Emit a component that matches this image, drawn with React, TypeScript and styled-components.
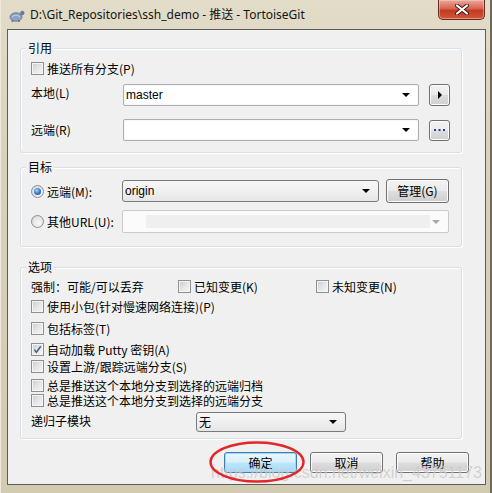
import React from 'react';
import styled, { createGlobalStyle, css } from 'styled-components';

const Global = createGlobalStyle`
  html, body { margin: 0; padding: 0; background: #ffffff; }
  body {
    width: 492px; height: 493px; overflow: hidden;
    font-family: "Noto Sans CJK SC", "Noto Sans", sans-serif;
    font-size: 12px; color: #000;
  }
  * { box-sizing: border-box; }
`;

const Window = styled.div`
  position: relative;
  width: 492px;
  height: 493px;
  display: flex;
  flex-direction: column;
  padding: 0 6px 8px 7px;
  background: linear-gradient(to bottom, #e2dcc8 0%, #d9d2bb 30%, #d2cab1 100%);
  box-shadow: inset -2px 0 0 #6f6a5c, inset 1px 0 0 #efeadb;
`;

const TitleBar = styled.div`
  height: 29px;
  display: flex;
  align-items: flex-start;
  padding-left: 2px;
`;

const TitleIcon = styled.div`
  width: 16px;
  height: 14px;
  margin-top: 9px;
  display: flex;
`;

const TitleText = styled.div`
  margin-left: 5px;
  margin-top: 7px;
  font-family: "Noto Sans", "Noto Sans CJK SC", sans-serif;
  font-size: 12px;
  line-height: 16px;
  color: #141414;
  flex: 1;
  white-space: nowrap;
`;

const CloseButton = styled.div`
  width: 47px;
  height: 20px;
  margin-right: 1px;
  border: 1px solid #5e2a22;
  border-top: none;
  border-radius: 0 0 5px 5px;
  background: linear-gradient(to bottom, #e9a99a 0%, #d8644f 45%, #c23a22 55%, #d4553a 100%);
  box-shadow: inset 0 0 0 1px rgba(255, 220, 210, 0.45);
  display: flex;
  align-items: center;
  justify-content: center;
`;

const Client = styled.div`
  flex: 1;
  border: 1px solid #5c5c5c;
  background: #f0f0f0;
  padding: 18px 16px 11px 12px;
  display: flex;
  flex-direction: column;
`;

const Group = styled.div<{ $height: number; $gapAfter: number; $padTop: number }>`
  position: relative;
  height: ${(p) => p.$height}px;
  margin-right: 7px;
  margin-bottom: ${(p) => p.$gapAfter}px;
  border: 1px solid #d5dfe5;
  border-radius: 3px;
  box-shadow: inset 1px 1px 0 #ffffff, 1px 1px 0 #ffffff;
  padding: ${(p) => p.$padTop}px 10px 0 10px;
  display: flex;
  flex-direction: column;
`;

const GroupTitle = styled.span`
  position: absolute;
  top: -8px;
  left: 5px;
  padding: 0 2px;
  background: #f0f0f0;
  line-height: 14px;
  font-size: 12px;
`;

const Row = styled.div<{ $top?: number; $h?: number }>`
  display: flex;
  align-items: center;
  height: ${(p) => p.$h ?? 13}px;
  margin-top: ${(p) => p.$top ?? 0}px;
  line-height: 13px;
  white-space: nowrap;
`;

const FieldGrid = styled.div<{ $top: number; $h: number; $cols: string }>`
  display: grid;
  grid-template-columns: ${(p) => p.$cols};
  align-items: center;
  height: ${(p) => p.$h}px;
  margin-top: ${(p) => p.$top}px;
  white-space: nowrap;
`;

const OptionsGrid = styled.div`
  display: grid;
  grid-template-columns: 147px 138px auto;
  align-items: center;
  height: 13px;
  margin-top: 0;
  white-space: nowrap;
  line-height: 13px;
`;

const Label = styled.span<{ $dy?: number }>`
  line-height: 13px;
  position: relative;
  top: ${(p) => p.$dy ?? 0}px;
`;

const Box = styled.span`
  width: 13px;
  height: 13px;
  flex: none;
  border: 1px solid #8e8f8f;
  background: linear-gradient(135deg, #c8cbcf 0%, #e4e5e7 50%, #f7f7f7 100%);
  box-shadow: inset 0 0 0 1px #f5f5f5;
  margin-right: 3px;
  display: flex;
  align-items: center;
  justify-content: center;
`;

const Check = styled.label`
  display: flex;
  align-items: center;
  height: 13px;
`;

const RadioDot = styled.span<{ $on?: boolean }>`
  width: 13px;
  height: 13px;
  flex: none;
  border-radius: 50%;
  border: 1px solid #8e8f8f;
  background: radial-gradient(circle at 60% 65%, #f8f8f8 0%, #e6e6e6 55%, #c9cbce 100%);
  margin-right: 3px;
  display: flex;
  align-items: center;
  justify-content: center;
  &::after {
    content: '';
    display: ${(p) => (p.$on ? 'block' : 'none')};
    width: 7px;
    height: 7px;
    border-radius: 50%;
    background: radial-gradient(circle at 40% 35%, #a9d5ff 0%, #3d86d6 45%, #0d3f86 100%);
  }
`;

const comboBase = css`
  position: relative;
  display: flex;
  align-items: center;
  padding-left: 2px;
  font-family: "Liberation Sans", "Noto Sans CJK SC", sans-serif;
  font-size: 12px;
`;

const Combo = styled.div<{ $w: number; $h: number; $kind?: 'edit' | 'list' | 'disabled' }>`
  ${comboBase};
  width: ${(p) => p.$w}px;
  height: ${(p) => p.$h}px;
  ${(p) =>
    p.$kind === 'list'
      ? css`
          border: 1px solid #7a7a7a;
          border-radius: 3px;
          background: linear-gradient(to bottom, #f7f7f7 0%, #f0f0f0 50%, #e6e6e6 100%);
        `
      : p.$kind === 'disabled'
      ? css`
          border: 1px solid #c9cacb;
          border-radius: 2px;
          background: #fbfbfb;
        `
      : css`
          border: 1px solid #abadb3;
          border-top-color: #abadb3;
          border-radius: 2px;
          background: #ffffff;
          box-shadow: inset 0 0 0 1px #f6f9fb;
        `}
`;

const ComboText = styled.span`
  flex: 1;
  line-height: 14px;
`;

const DisabledField = styled.span`
  position: absolute;
  left: 23px;
  right: 18px;
  top: 4px;
  bottom: 4px;
  background: #efefef;
`;

const Arrow = styled.span<{ $color?: string }>`
  position: absolute;
  right: 8px;
  top: 50%;
  margin-top: -2px;
  width: 0;
  height: 0;
  border-left: 4px solid transparent;
  border-right: 4px solid transparent;
  border-top: 4px solid ${(p) => p.$color ?? '#000'};
`;

const PushButton = styled.button<{ $w: number; $h: number; $default?: boolean }>`
  width: ${(p) => p.$w}px;
  height: ${(p) => p.$h}px;
  padding: 0;
  margin: 0;
  border: 1px solid ${(p) => (p.$default ? '#3c7fb1' : '#707070')};
  border-radius: 3px;
  background: ${(p) =>
    p.$default
      ? 'linear-gradient(to bottom, #eaf6fd 0%, #d9f0fc 48%, #bee6fd 52%, #a7d9f5 100%)'
      : 'linear-gradient(to bottom, #f2f2f2 0%, #ebebeb 48%, #dddddd 52%, #cfcfcf 100%)'};
  box-shadow: inset 0 0 0 1px ${(p) => (p.$default ? '#9fd7f4' : '#fcfcfc')};
  font-family: "Noto Sans CJK SC", "Noto Sans", sans-serif;
  font-size: 12px;
  line-height: 14px;
  color: #000;
  display: flex;
  align-items: center;
  justify-content: center;
`;

const ButtonRow = styled.div`
  display: flex;
  justify-content: flex-end;
  gap: 13px;
  margin-top: 0;
`;

const Watermark = styled.div`
  position: absolute;
  left: 211px;
  top: 464px;
  font-family: "Liberation Sans", Arial, sans-serif;
  font-size: 16px;
  line-height: 18px;
  color: rgba(175, 175, 175, 0.55);
  text-shadow: 0 0 1px rgba(255, 255, 255, 0.6);
  white-space: nowrap;
  pointer-events: none;
`;

const Ellipse = styled.svg`
  position: absolute;
  left: 207px;
  top: 440px;
  pointer-events: none;
`;

const TortoiseIcon = () => (
  <svg width="16" height="14" viewBox="0 0 16 14">
    <ellipse cx="7" cy="8" rx="6" ry="4.2" fill="#8ea3c4" stroke="#5b6b86" strokeWidth="0.8" />
    <path d="M3 8 Q7 4.5 11 8" fill="none" stroke="#c8d4e6" strokeWidth="0.9" />
    <circle cx="13.3" cy="4" r="1.8" fill="#6d7f9e" stroke="#4d5a73" strokeWidth="0.6" />
    <rect x="2.5" y="11" width="2" height="2" fill="#6d7f9e" />
    <rect x="9" y="11" width="2" height="2" fill="#6d7f9e" />
  </svg>
);

const CloseX = () => (
  <svg width="14" height="11" viewBox="0 0 14 11">
    <path d="M2 1.5 L12 9.5 M12 1.5 L2 9.5" stroke="#3b1b16" strokeWidth="4" strokeLinecap="round" />
    <path d="M2 1.5 L12 9.5 M12 1.5 L2 9.5" stroke="#ffffff" strokeWidth="2.2" strokeLinecap="round" />
  </svg>
);

const CheckBox = ({ checked, children }: { checked?: boolean; children: React.ReactNode }) => (
  <Check>
    <Box>
      {checked && (
        <svg width="9" height="9" viewBox="0 0 9 9">
          <path d="M1.3 4.6 L3.4 7.2 L7.8 1.3" fill="none" stroke="#4a5d80" strokeWidth="1.5" />
        </svg>
      )}
    </Box>
    <Label>{children}</Label>
  </Check>
);

const Radio = ({ on, children }: { on?: boolean; children: React.ReactNode }) => (
  <Check>
    <RadioDot $on={on} />
    <Label>{children}</Label>
  </Check>
);

export default function App() {
  return (
    <>
      <Global />
      <Window>
        <TitleBar>
          <TitleIcon>
            <TortoiseIcon />
          </TitleIcon>
          <TitleText>D:\Git_Repositories\ssh_demo - 推送 - TortoiseGit</TitleText>
          <CloseButton>
            <CloseX />
          </CloseButton>
        </TitleBar>
        <Client>
          <Group $height={105} $gapAfter={14} $padTop={12}>
            <GroupTitle>引用</GroupTitle>
            <Row $h={14}>
              <CheckBox>推送所有分支(P)</CheckBox>
            </Row>
            <FieldGrid $top={8} $h={23} $cols="92px 296px 10px 21px">
              <Label $dy={-2}>本地(L)</Label>
              <Combo $w={296} $h={22} $kind="edit">
                <ComboText>master</ComboText>
                <Arrow />
              </Combo>
              <span />
              <PushButton $w={21} $h={22}>
                <svg width="6" height="8" viewBox="0 0 6 8">
                  <path d="M1 0 L5 4 L1 8 Z" fill="#000" />
                </svg>
              </PushButton>
            </FieldGrid>
            <FieldGrid $top={13} $h={22} $cols="92px 296px 10px 21px">
              <Label $dy={-1}>远端(R)</Label>
              <Combo $w={296} $h={22} $kind="edit">
                <ComboText />
                <Arrow />
              </Combo>
              <span />
              <PushButton $w={21} $h={21}>
                <svg width="11" height="4" viewBox="0 0 11 4">
                  <rect x="0" y="1" width="2" height="2" fill="#2a3a9a" />
                  <rect x="4.5" y="1" width="2" height="2" fill="#2a3a9a" />
                  <rect x="9" y="1" width="2" height="2" fill="#2a3a9a" />
                </svg>
              </PushButton>
            </FieldGrid>
          </Group>

          <Group $height={80} $gapAfter={20} $padTop={11}>
            <GroupTitle>目标</GroupTitle>
            <FieldGrid $top={0} $h={24} $cols="91px 257px 7px 63px">
              <Radio on>远端(M):</Radio>
              <Combo $w={257} $h={22} $kind="list">
                <ComboText>origin</ComboText>
                <Arrow />
              </Combo>
              <span />
              <PushButton $w={63} $h={24}>管理(G)</PushButton>
            </FieldGrid>
            <FieldGrid $top={7} $h={23} $cols="91px 327px">
              <Radio>其他URL(U):</Radio>
              <Combo $w={327} $h={23} $kind="disabled">
                <DisabledField />
                <Arrow $color="#a8a8a8" />
              </Combo>
            </FieldGrid>
          </Group>

          <Group $height={172} $gapAfter={13} $padTop={12}>
            <GroupTitle>选项</GroupTitle>
            <OptionsGrid>
              <Label>强制：可能/可以丢弃</Label>
              <CheckBox>已知变更(K)</CheckBox>
              <CheckBox>未知变更(N)</CheckBox>
            </OptionsGrid>
            <Row $top={7}>
              <CheckBox>使用小包(针对慢速网络连接)(P)</CheckBox>
            </Row>
            <Row $top={9}>
              <CheckBox>包括标签(T)</CheckBox>
            </Row>
            <Row $top={8}>
              <CheckBox checked>自动加载 Putty 密钥(A)</CheckBox>
            </Row>
            <Row $top={4}>
              <CheckBox>设置上游/跟踪远端分支(S)</CheckBox>
            </Row>
            <Row $top={6}>
              <CheckBox>总是推送这个本地分支到选择的远端归档</CheckBox>
            </Row>
            <Row $top={2}>
              <CheckBox>总是推送这个本地分支到选择的远端分支</CheckBox>
            </Row>
            <FieldGrid $top={5} $h={20} $cols="165px 150px">
              <Label $dy={-2}>递归子模块</Label>
              <Combo $w={150} $h={20} $kind="list">
                <ComboText style={{ fontFamily: '"Noto Sans CJK SC", sans-serif' }}>无</ComboText>
                <Arrow />
              </Combo>
            </FieldGrid>
          </Group>

          <ButtonRow>
            <PushButton $w={73} $h={21} $default>
              确定
            </PushButton>
            <PushButton $w={73} $h={21}>取消</PushButton>
            <PushButton $w={73} $h={21}>帮助</PushButton>
          </ButtonRow>
        </Client>
        <Watermark>https://blog.csdn.net/weixin_43751173</Watermark>
        <Ellipse width="100" height="44" viewBox="0 0 100 44">
          <ellipse cx="50" cy="22" rx="46.5" ry="19.5" fill="none" stroke="#e3262a" strokeWidth="2.4" />
        </Ellipse>
      </Window>
    </>
  );
}
